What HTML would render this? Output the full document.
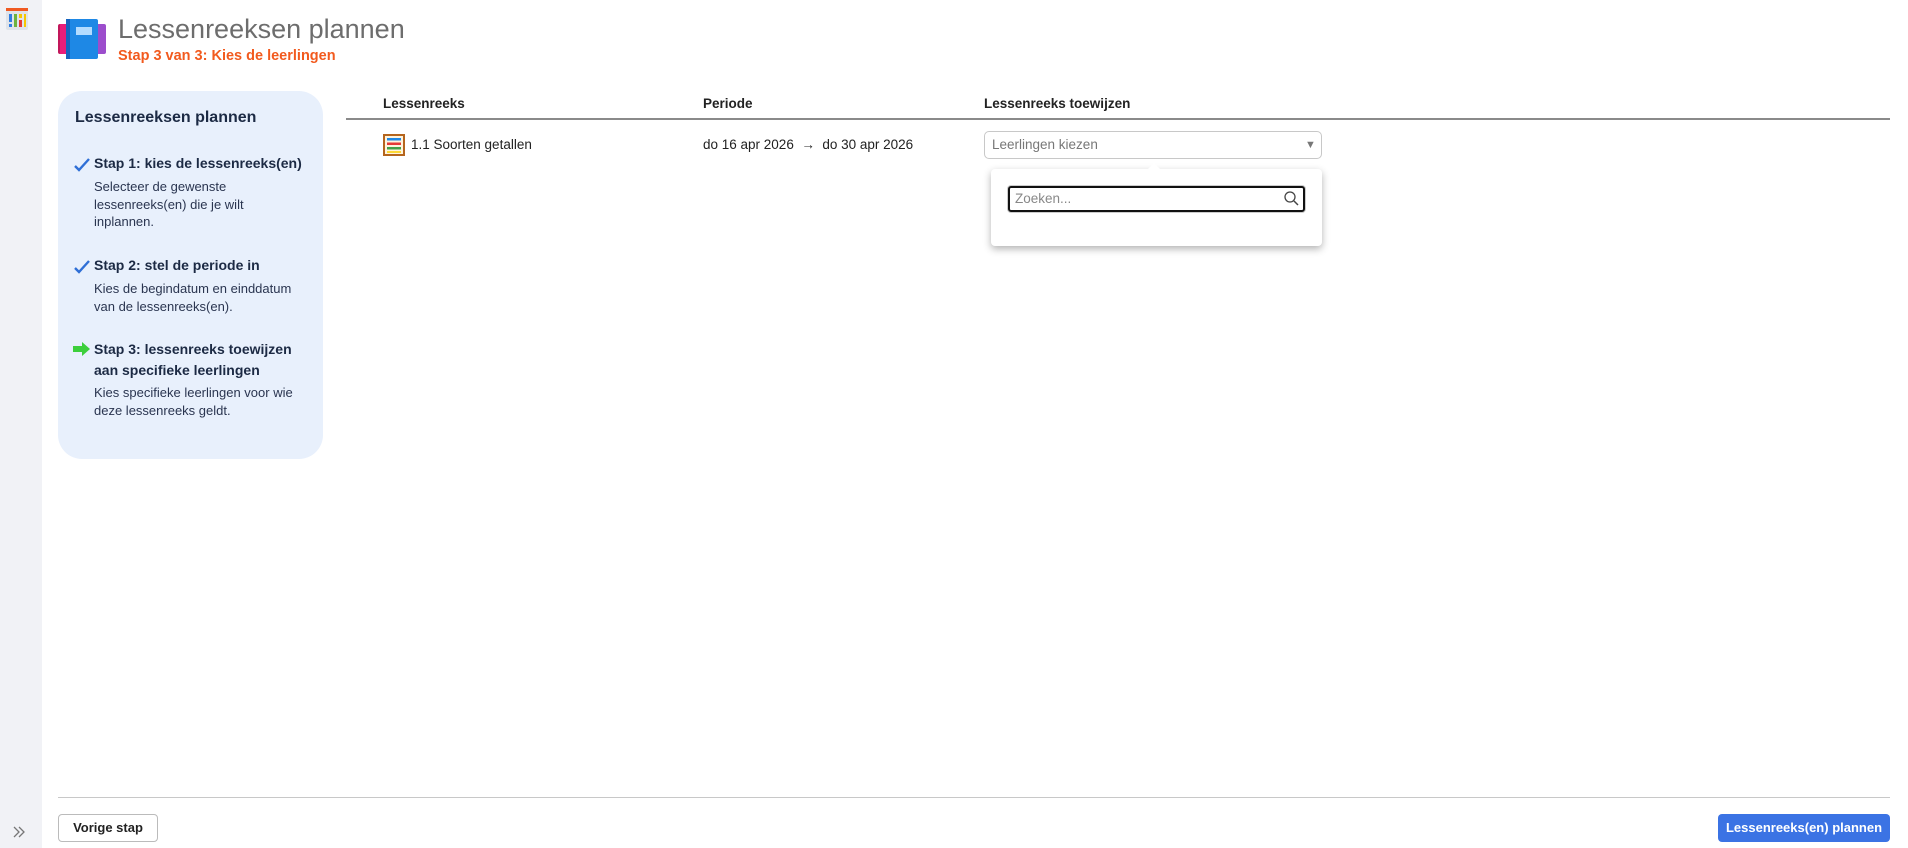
<!DOCTYPE html>
<html><head><meta charset="utf-8"><style>
*{box-sizing:border-box;margin:0;padding:0}
body{width:1908px;height:848px;background:#fff;font-family:"Liberation Sans",sans-serif;color:#222;position:relative;overflow:hidden}
.abs{position:absolute;white-space:nowrap}
.side{position:absolute;left:0;top:0;width:42px;height:848px;background:#f1f2f6}
.panel{position:absolute;left:58px;top:91px;width:265px;height:368px;background:#e8f0fc;border-radius:24px}
.h{font-size:14px;font-weight:bold;color:#1c2a44}
.d{font-size:13px;color:#2a3550;line-height:17.5px}
.th{font-size:13.5px;font-weight:bold;color:#222}
</style></head><body>
<div class="side"></div>
<svg class="abs" style="left:6px;top:8px" width="22" height="22" viewBox="0 0 22 22"><rect x="0" y="0" width="22" height="22" rx="2" fill="#dfe3ea"/><rect x="0" y="0" width="22" height="3" fill="#f05a22"/><rect x="3" y="6" width="3" height="8" fill="#2f7de1"/><rect x="3" y="16" width="3" height="3" fill="#2f7de1"/><rect x="8" y="6" width="3" height="13" fill="#6cb33f"/><rect x="13" y="6" width="3" height="4" fill="#f7c600"/><rect x="13" y="12" width="3" height="7" fill="#e53935"/><rect x="18" y="6" width="2" height="13" fill="#f7c600"/></svg>
<svg class="abs" style="left:12px;top:826px" width="14" height="12" viewBox="0 0 14 12"><path d="M2 1l5 5-5 5M7 1l5 5-5 5" fill="none" stroke="#777" stroke-width="1.3"/></svg>

<svg class="abs" style="left:58px;top:19px" width="48" height="40" viewBox="0 0 48 40"><rect x="0" y="5" width="10" height="30" rx="2" fill="#c2185b"/><rect x="2" y="5" width="10" height="30" fill="#e91e7a"/><rect x="36" y="5" width="12" height="30" rx="2" fill="#9c4dcc"/><rect x="8" y="0" width="32" height="40" rx="2" fill="#1e88e5"/><rect x="8" y="0" width="4" height="40" fill="#1565c0"/><rect x="18" y="8" width="16" height="8" fill="#b3dcff"/></svg>
<div class="abs" style="left:118px;top:14px;font-size:27px;color:#6d6d6d">Lessenreeksen plannen</div>
<div class="abs" style="left:118px;top:48px;font-size:14.5px;font-weight:bold;color:#f25a1e">Stap 3 van 3: Kies de leerlingen</div>

<div class="panel"></div>
<div class="abs" style="left:75px;top:109px;font-size:16px;color:#1c2a44;font-weight:bold">Lessenreeksen plannen</div>
<svg class="abs" style="left:74px;top:158px" width="16" height="14" viewBox="0 0 16 14"><path d="M1 8l4 4L15 1" fill="none" stroke="#2f6fd6" stroke-width="2.4"/></svg>
<div class="abs h" style="left:94px;top:155px">Stap 1: kies de lessenreeks(en)</div>
<div class="abs d" style="left:94px;top:178px">Selecteer de gewenste<br>lessenreeks(en) die je wilt<br>inplannen.</div>
<svg class="abs" style="left:74px;top:260px" width="16" height="14" viewBox="0 0 16 14"><path d="M1 8l4 4L15 1" fill="none" stroke="#2f6fd6" stroke-width="2.4"/></svg>
<div class="abs h" style="left:94px;top:257px">Stap 2: stel de periode in</div>
<div class="abs d" style="left:94px;top:280px">Kies de begindatum en einddatum<br>van de lessenreeks(en).</div>
<svg class="abs" style="left:73px;top:342px" width="17" height="14" viewBox="0 0 17 14"><path d="M0 4h9V0l8 7-8 7v-4H0z" fill="#3ccf3c"/></svg>
<div class="abs h" style="left:94px;top:339px;line-height:21px">Stap 3: lessenreeks toewijzen<br>aan specifieke leerlingen</div>
<div class="abs d" style="left:94px;top:384px">Kies specifieke leerlingen voor wie<br>deze lessenreeks geldt.</div>

<div class="abs th" style="left:383px;top:96px">Lessenreeks</div>
<div class="abs th" style="left:703px;top:96px">Periode</div>
<div class="abs th" style="left:984px;top:96px">Lessenreeks toewijzen</div>
<div class="abs" style="left:346px;top:118px;width:1544px;height:2px;background:#8a8a8a"></div>

<svg class="abs" style="left:383px;top:134px" width="22" height="22" viewBox="0 0 22 22"><rect x="1" y="1" width="20" height="20" fill="#fff3dc" stroke="#b5651d" stroke-width="2"/><rect x="4" y="4" width="14" height="2.5" fill="#1e88e5"/><rect x="4" y="8.5" width="14" height="2.5" fill="#e53935"/><rect x="4" y="13" width="14" height="2.5" fill="#43a047"/><rect x="4" y="17" width="14" height="2" fill="#fdd835"/></svg>
<div class="abs" style="left:411px;top:137px;font-size:13.5px">1.1 Soorten getallen</div>
<div class="abs" style="left:703px;top:137px;font-size:13.5px">do 16 apr 2026 &nbsp;→&nbsp; do 30 apr 2026</div>

<div class="abs" style="left:984px;top:131px;width:338px;height:28px;border:1px solid #c8c8c8;border-radius:5px"></div>
<div class="abs" style="left:992px;top:137px;font-size:13.5px;color:#777">Leerlingen kiezen</div>
<div class="abs" style="left:1305px;top:139px;font-size:11px;color:#777">▼</div>

<div class="abs" style="left:991px;top:169px;width:331px;height:77px;background:#fff;border-radius:4px;box-shadow:0 3px 8px rgba(0,0,0,.3)"></div>
<div class="abs" style="left:1147px;top:163px;width:0;height:0;border-left:7px solid transparent;border-right:7px solid transparent;border-bottom:7px solid #fff"></div>
<div class="abs" style="left:1008px;top:186px;width:297px;height:26px;border:2px solid #111;border-radius:3px;box-shadow:0 0 0 1px #ccc"></div>
<div class="abs" style="left:1015px;top:191px;font-size:13.5px;color:#888">Zoeken...</div>
<svg class="abs" style="left:1284px;top:191px" width="15" height="15" viewBox="0 0 15 15"><circle cx="6" cy="6" r="5" fill="none" stroke="#444" stroke-width="1.3"/><path d="M10 10l4 4" stroke="#444" stroke-width="1.5"/></svg>

<div class="abs" style="left:58px;top:797px;width:1832px;height:1px;background:#c8c8c8"></div>
<div class="abs" style="left:58px;top:814px;width:100px;height:28px;border:1px solid #bbb;border-radius:4px;font-size:13px;font-weight:bold;text-align:center;line-height:26px">Vorige stap</div>
<div class="abs" style="left:1718px;top:814px;width:172px;height:28px;background:#3b73e4;color:#fff;border-radius:4px;font-size:13px;font-weight:bold;text-align:center;line-height:28px">Lessenreeks(en) plannen</div>
</body></html>
